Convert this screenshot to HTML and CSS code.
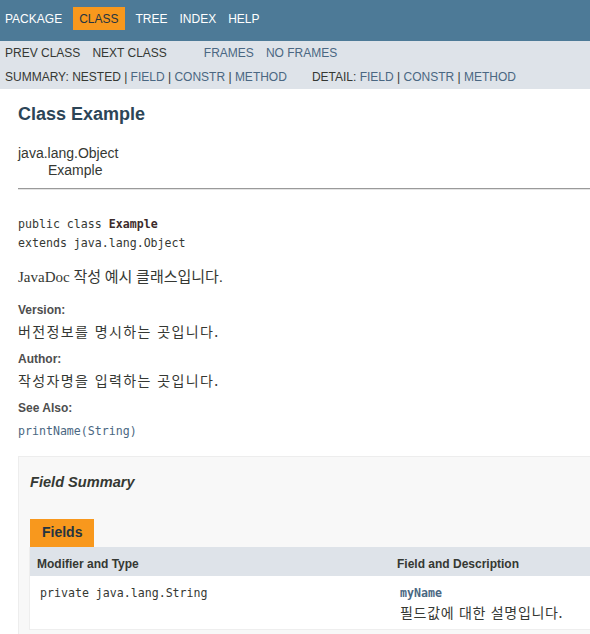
FILE: index.html
```html
<!DOCTYPE html>
<html lang="ko">
<head>
<meta charset="utf-8">
<title>Example</title>
<link rel="stylesheet" href="styles.css">
</head>
<body>
<div class="topNav">
  <ul class="navList">
    <li><a href="#">Package</a></li>
    <li class="navBarCell1Rev">Class</li>
    <li><a href="#">Tree</a></li>
    <li><a href="#">Index</a></li>
    <li><a href="#">Help</a></li>
  </ul>
</div>
<div class="subNav">
  <div class="subRow">
    <ul class="navList">
      <li>Prev Class</li>
      <li>Next Class</li>
    </ul>
    <ul class="navList">
      <li><a href="#">Frames</a></li>
      <li><a href="#">No Frames</a></li>
    </ul>
  </div>
  <div class="subRow second">
    <ul class="subNavList">
      <li>Summary:&nbsp;</li>
      <li>Nested&nbsp;|&nbsp;</li>
      <li><a href="#">Field</a>&nbsp;|&nbsp;</li>
      <li><a href="#">Constr</a>&nbsp;|&nbsp;</li>
      <li><a href="#">Method</a></li>
    </ul>
    <ul class="subNavList">
      <li>Detail:&nbsp;</li>
      <li><a href="#">Field</a>&nbsp;|&nbsp;</li>
      <li><a href="#">Constr</a>&nbsp;|&nbsp;</li>
      <li><a href="#">Method</a></li>
    </ul>
  </div>
</div>
<div class="content">
  <h2 class="title">Class Example</h2>
  <div class="inheritance">
    <div>java.lang.Object</div>
    <div class="child">Example</div>
  </div>
  <hr class="rule">
  <pre class="signature">public class <span class="typeName">Example</span>
extends java.lang.Object</pre>
  <div class="block">JavaDoc 작성 예시 클래스입니다.</div>
  <dl class="tags">
    <dt>Version:</dt>
    <dd class="ko">버전정보를 명시하는 곳입니다.</dd>
    <dt>Author:</dt>
    <dd class="ko">작성자명을 입력하는 곳입니다.</dd>
    <dt>See Also:</dt>
    <dd class="code"><a href="#">printName(String)</a></dd>
  </dl>
  <div class="summaryBox">
    <h3 class="summaryTitle">Field Summary</h3>
    <div class="caption"><span>Fields</span></div>
    <table class="memberSummary">
      <tr>
        <th class="colFirst">Modifier and Type</th>
        <th class="colLast">Field and Description</th>
      </tr>
      <tr>
        <td class="colFirst"><code>private java.lang.String</code></td>
        <td class="colLast"><code class="member"><a href="#">myName</a></code>
          <div class="desc">필드값에 대한 설명입니다.</div></td>
      </tr>
    </table>
  </div>
</div>
</body>
</html>
```
FILE: styles.css
```css
html, body {
  overflow: hidden;
}
body {
  margin: 0;
  background: #ffffff;
  color: #353833;
  font-family: "Liberation Sans", Arial, "Noto Sans CJK KR", sans-serif;
  font-size: 14px;
}
a {
  color: #4A6782;
  text-decoration: none;
}
ul {
  list-style: none;
  margin: 0;
  padding: 0;
}

/* top navigation */
.topNav {
  background: #4D7A97;
  color: #ffffff;
  height: 41px;
  box-sizing: border-box;
  padding-top: 7px;
  font-size: 12px;
}
.topNav a {
  color: #ffffff;
}
.navList {
  display: flex;
  margin-right: 25px;
}
.navList li {
  padding: 5px 6px;
  line-height: 13px;
  text-transform: uppercase;
}
.topNav .navList li {
  padding: 6px 6px 4px 6px;
}
.topNav .navList li:first-child {
  padding-left: 5px;
}
.navBarCell1Rev {
  background: #F8981D;
  color: #253441;
  margin: 0 5px;
}

/* sub navigation */
.subNav {
  background: #dee3e9;
  height: 48px;
  font-size: 12px;
}
.subRow {
  display: flex;
  padding-top: 1px;
}
.subRow .navList li:first-child {
  padding-left: 5px;
}
.subRow .navList + .navList li:first-child {
  padding-left: 6px;
}
.subRow.second {
  padding: 5px 0 0 5px;
}
.subNavList {
  display: flex;
  margin-right: 25px;
}
.subNavList li {
  text-transform: uppercase;
  line-height: 14px;
}

/* content */
.content {
  width: 640px;
  margin-left: 18px;
  display: flex;
  flex-direction: column;
}
.title {
  margin: 14px 0 0 0;
  font-size: 18px;
  line-height: 22px;
  color: #2c4557;
  font-weight: bold;
}
.inheritance {
  margin-top: 20px;
  line-height: 17px;
}
.inheritance .child {
  padding-left: 30px;
}
.rule {
  margin: 9px 0 0 0;
  border: 0;
  border-top: 1px solid #9a9a9a;
  border-bottom: 1px solid #e4e4e4;
  height: 0;
}
.signature {
  margin: 25px 0 0 0;
  font-family: "DejaVu Sans Mono", "Noto Sans CJK KR", monospace;
  font-size: 11.6px;
  line-height: 19px;
}
.typeName {
  font-weight: bold;
  color: #3c2b2b;
}
.block {
  margin-top: 14px;
  font-family: "Liberation Serif", Georgia, "Noto Sans CJK KR", serif;
  font-size: 15px;
  line-height: 20px;
}
.tags {
  margin: 15px 0 0 0;
}
.tags dt {
  font-size: 12px;
  font-weight: bold;
  line-height: 16px;
  color: #4E4E4E;
}
.tags dd {
  margin: 3px 0 10px 0;
  line-height: 20px;
}
.tags dd.ko {
  font-family: "Noto Sans CJK KR", sans-serif;
  font-size: 14px;
  letter-spacing: 1.4px;
}
.tags dd.code {
  margin-top: 5px;
  font-family: "DejaVu Sans Mono", monospace;
  font-size: 11.6px;
}

/* field summary */
.summaryBox {
  margin-top: 5px;
  border: 1px solid #ededed;
  background: #f8f8f8;
  padding: 15px 20px 5px 10px;
  height: 240px;
}
.summaryTitle {
  margin: 0 0 0 1px;
  font-size: 14.6px;
  font-style: italic;
  font-weight: bold;
  line-height: 20px;
}
.caption {
  margin-top: 27px;
  padding-left: 1px;
  display: flex;
}
.caption span {
  background: #F8981D;
  color: #253441;
  font-weight: bold;
  font-size: 14px;
  height: 16px;
  line-height: 16px;
  padding: 5px 12px 7px 12px;
}
.memberSummary {
  width: 100%;
  border-collapse: collapse;
  border-left: 1px solid #eeeeee;
  border-bottom: 1px solid #eeeeee;
  background: #ffffff;
}
.memberSummary th {
  background: #dee3e9;
  text-align: left;
  font-size: 12px;
  font-weight: bold;
  line-height: 18px;
  padding: 8px 3px 3px 7px;
}
.memberSummary th.colFirst {
  width: 350px;
}
.memberSummary td {
  vertical-align: top;
  padding: 7px 0 7px 10px;
  line-height: 19px;
}
.memberSummary code {
  font-family: "DejaVu Sans Mono", "Noto Sans CJK KR", monospace;
  font-size: 11.6px;
}
.memberSummary .member a {
  font-weight: bold;
}
.desc {
  font-family: "Noto Sans CJK KR", sans-serif;
  font-size: 14px;
  letter-spacing: 0.7px;
}
```
